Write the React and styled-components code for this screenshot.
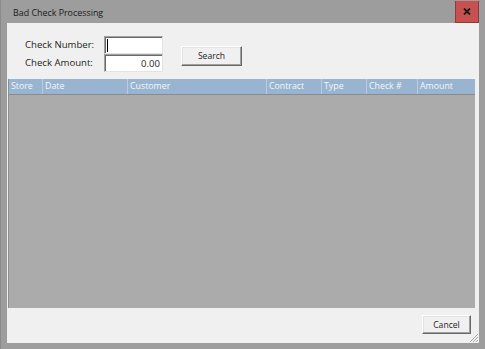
import React from "react";
import styled, { createGlobalStyle } from "styled-components";

const Global = createGlobalStyle`
  html, body { margin: 0; padding: 0; background: #9d9d9d; }
  body { font-family: "Open Sans", "Noto Sans", sans-serif; }
`;

const Window = styled.div`
  width: 485px;
  height: 349px;
  box-sizing: border-box;
  background: #9d9d9d;
  border-left: 1px solid #8a8a8a;
  display: flex;
  flex-direction: column;
  position: relative;
`;

const TitleBar = styled.div`
  height: 23px;
  display: flex;
  align-items: center;
  justify-content: space-between;
  padding-left: 12px;
`;

const Title = styled.span`
  font-size: 8.9px;
  color: #1a1a1a;
  padding-top: 2px;
`;

const CloseButton = styled.div`
  width: 24px;
  height: 22px;
  margin-right: 6px;
  margin-top: 1px;
  align-self: flex-start;
  box-sizing: border-box;
  background: #c75050;
  border: 1px solid #8c3a3a;
  border-top: none;
  display: flex;
  align-items: center;
  justify-content: center;
`;

const Client = styled.div`
  flex: 1;
  margin: 0 6px 6px 6px;
  background: #f0f0f0;
  display: flex;
  flex-direction: column;
  position: relative;
`;

const FormArea = styled.div`
  height: 56px;
  display: flex;
  align-items: flex-start;
  box-sizing: border-box;
  padding: 13px 0 0 18px;
`;

const Labels = styled.div`
  display: flex;
  flex-direction: column;
  width: 79px;
`;

const Label = styled.div`
  height: 18px;
  line-height: 18px;
  font-size: 9.6px;
  color: #1e1e1e;
`;

const Inputs = styled.div`
  display: flex;
  flex-direction: column;
`;

const Input = styled.div`
  width: 59px;
  height: 18px;
  box-sizing: border-box;
  background: #ffffff;
  border-top: 1px solid #a0a0a0;
  border-left: 1px solid #a0a0a0;
  border-right: 1px solid #e3e3e3;
  border-bottom: 1px solid #e3e3e3;
  box-shadow: inset 1px 1px 0 #696969;
  font-size: 9.6px;
  color: #1e1e1e;
  line-height: 17px;
  padding: 0 2px;
  display: flex;
  align-items: center;
  justify-content: ${(p) => (p.$right ? "flex-end" : "flex-start")};
`;

const Caret = styled.span`
  display: inline-block;
  width: 1px;
  height: 13px;
  background: #000;
`;

const Button = styled.div`
  width: ${(p) => p.$w}px;
  height: ${(p) => p.$h}px;
  box-sizing: border-box;
  background: #f0f0f0;
  border-top: 1px solid #ffffff;
  border-left: 1px solid #ffffff;
  border-right: 1px solid #696969;
  border-bottom: 1px solid #696969;
  box-shadow: inset -1px -1px 0 #a0a0a0, inset 1px 1px 0 #e3e3e3;
  font-size: 8.6px;
  color: #1e1e1e;
  display: flex;
  align-items: center;
  justify-content: center;
  margin-left: ${(p) => p.$ml || 0}px;
  margin-top: ${(p) => p.$mt || 0}px;
`;

const Grid = styled.div`
  margin: 0 4px 0 1px;
  height: 229px;
  background: #ababab;
  border-left: 1px solid #8f8f8f;
  box-sizing: border-box;
  display: flex;
  flex-direction: column;
`;

const Header = styled.div`
  height: 15px;
  background: #99b4d1;
  display: flex;
  border-bottom: 1px solid #8a8a8a;
`;

const HeaderCell = styled.div`
  width: ${(p) => p.$w}px;
  flex: ${(p) => (p.$grow ? 1 : "none")};
  box-sizing: border-box;
  border-right: ${(p) => (p.$grow ? "none" : "1px solid #b9cbe0")};
  font-size: 8.8px;
  color: #f4f7fb;
  padding-left: 2px;
  line-height: 15px;
  white-space: nowrap;
  overflow: hidden;
`;

const Footer = styled.div`
  flex: 1;
  display: flex;
  justify-content: flex-end;
  align-items: flex-start;
  padding: 7px 8px 0 0;
`;

const Grip = styled.svg`
  position: absolute;
  right: 0;
  bottom: 0;
`;

const columns = [
  { name: "Store", w: 34 },
  { name: "Date", w: 85 },
  { name: "Customer", w: 139 },
  { name: "Contract", w: 55 },
  { name: "Type", w: 45 },
  { name: "Check #", w: 51 },
  { name: "Amount", grow: true },
];

export default function App() {
  return (
    <>
      <Global />
      <Window>
        <TitleBar>
          <Title>Bad Check Processing</Title>
          <CloseButton>
            <svg width="8" height="7" viewBox="0 0 8 7">
              <path d="M1 0.5 L7 6.5 M7 0.5 L1 6.5" stroke="#1a1a1a" strokeWidth="1.8" />
            </svg>
          </CloseButton>
        </TitleBar>
        <Client>
          <FormArea>
            <Labels>
              <Label>Check Number:</Label>
              <Label>Check Amount:</Label>
            </Labels>
            <Inputs>
              <Input>
                <Caret />
              </Input>
              <Input $right>0.00</Input>
            </Inputs>
            <Button $w={61} $h={20} $ml={18} $mt={10}>
              Search
            </Button>
          </FormArea>
          <Grid>
            <Header>
              {columns.map((c) => (
                <HeaderCell key={c.name} $w={c.w} $grow={c.grow}>
                  {c.name}
                </HeaderCell>
              ))}
            </Header>
          </Grid>
          <Footer>
            <Button $w={49} $h={19}>
              Cancel
            </Button>
          </Footer>
          <Grip width="11" height="11" viewBox="0 0 11 11">
            <path
              d="M10 2 L2 10 M10 5 L5 10 M10 8 L8 10"
              stroke="#a8a8a8"
              strokeWidth="1"
            />
          </Grip>
        </Client>
      </Window>
    </>
  );
}
